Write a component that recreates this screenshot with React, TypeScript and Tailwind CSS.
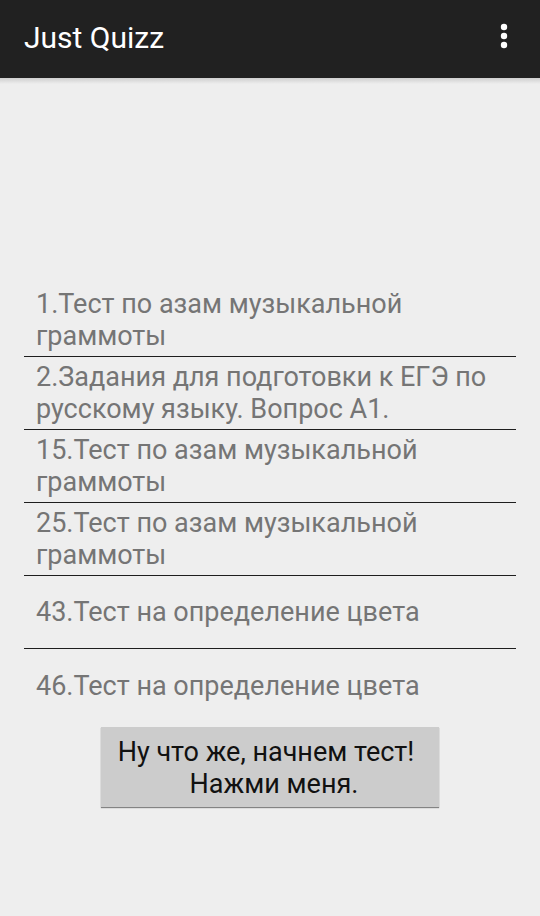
import React from "react";

const items = [
  "1.Тест по азам музыкальной граммоты",
  "2.Задания для подготовки к ЕГЭ по русскому языку. Вопрос А1.",
  "15.Тест по азам музыкальной граммоты",
  "25.Тест по азам музыкальной граммоты",
  "43.Тест на определение цвета",
  "46.Тест на определение цвета",
];

export default function App() {
  return (
    <div
      className="w-[540px] h-[916px] bg-[#eeeeee] flex flex-col overflow-hidden"
      style={{ fontFamily: "Roboto, 'Noto Sans', sans-serif" }}
    >
      <div className="relative h-[78px] bg-[#212121] flex items-center justify-between pl-[24px] pr-[31px] shrink-0">
        <span className="text-white text-[30px] leading-none mt-[-2px]">Just Quizz</span>
        <svg width="10" height="26" viewBox="0 0 10 26" className="mt-[-6px]">
          <circle cx="5" cy="4" r="3.2" fill="#fff" />
          <circle cx="5" cy="13" r="3.2" fill="#fff" />
          <circle cx="5" cy="22" r="3.2" fill="#fff" />
        </svg>
        <div className="absolute left-0 right-0 top-[78px] h-[6px] bg-gradient-to-b from-[#cfcfcf] to-[#eeeeee]" />
      </div>
      <div className="flex flex-col px-[24px] pt-[206px]">
        {items.map((t, i) => (
          <div
            key={i}
            className={
              "h-[73px] flex items-center pl-[12px] pr-[10px] text-[27px] leading-[32px] text-[#757575] " +
              (i < items.length - 1 ? "border-b border-[#1e1e1e]" : "")
            }
          >
            {t}
          </div>
        ))}
        <div className="flex justify-center mt-[5px]">
          <div className="w-[338px] h-[80px] bg-[#cccccc] shadow-[0_1px_1px_rgba(0,0,0,0.45)] flex flex-col items-center justify-center text-[27px] leading-[32px] text-[#111111] pt-[2px]">
            <span className="mr-[8px]">Ну что же, начнем тест!</span>
            <span className="ml-[8px]">Нажми меня.</span>
          </div>
        </div>
      </div>
    </div>
  );
}
